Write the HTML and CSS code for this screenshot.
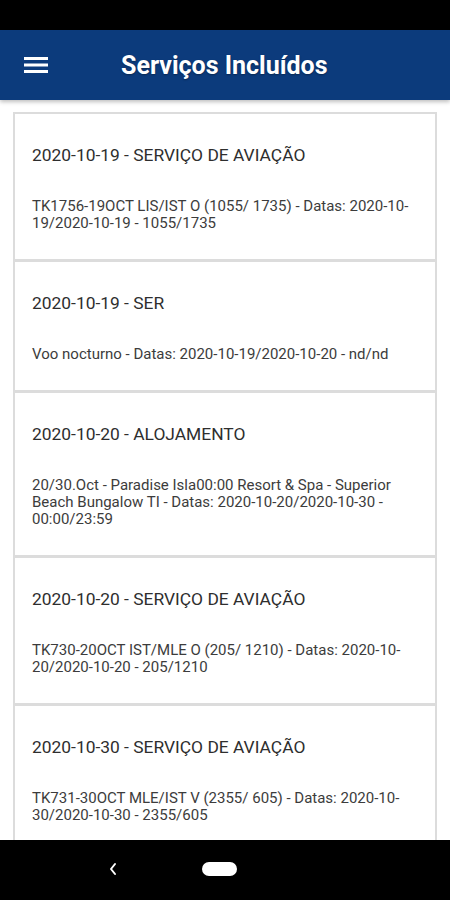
FILE: index.html
```html
<!DOCTYPE html>
<html lang="pt">

<head>
    <meta charset="UTF-8">
    <meta name="viewport" content="width=device-width, initial-scale=1.0">
    <title>Serviços Incluídos</title>
    <link rel="stylesheet" href="styles.css">
</head>

<body>
    <div class="status-bar"></div>

    <header class="app-bar">
        <button class="menu-btn" aria-label="Menu">
            <svg width="24" height="18" viewBox="0 0 24 18">
                <rect x="0" y="1" width="24" height="3" fill="#fff"></rect>
                <rect x="0" y="7.5" width="24" height="3" fill="#fff"></rect>
                <rect x="0" y="14" width="24" height="3" fill="#fff"></rect>
            </svg>
        </button>
        <h1>Serviços Incluídos</h1>
    </header>

    <main class="content">
        <div class="service-list">
            <div class="service-card">
                <h2>2020-10-19 - SERVIÇO DE AVIAÇÃO</h2>
                <p>TK1756-19OCT LIS/IST O (1055/ 1735) - Datas: 2020-10-19/2020-10-19 - 1055/1735</p>
            </div>
            <div class="service-card">
                <h2>2020-10-19 - SER</h2>
                <p>Voo nocturno - Datas: 2020-10-19/2020-10-20 - nd/nd</p>
            </div>
            <div class="service-card">
                <h2>2020-10-20 - ALOJAMENTO</h2>
                <p>20/30.Oct - Paradise Isla00:00 Resort &amp; Spa - Superior Beach Bungalow TI - Datas: 2020-10-20/2020-10-30 - 00:00/23:59</p>
            </div>
            <div class="service-card">
                <h2>2020-10-20 - SERVIÇO DE AVIAÇÃO</h2>
                <p>TK730-20OCT IST/MLE O (205/ 1210) - Datas: 2020-10-20/2020-10-20 - 205/1210</p>
            </div>
            <div class="service-card">
                <h2>2020-10-30 - SERVIÇO DE AVIAÇÃO</h2>
                <p>TK731-30OCT MLE/IST V (2355/ 605) - Datas: 2020-10-30/2020-10-30 - 2355/605</p>
            </div>
        </div>
    </main>

    <nav class="nav-bar">
        <svg class="back" width="12" height="16" viewBox="0 0 12 16">
            <path d="M8 3 L4 8 L8 13" stroke="#fff" stroke-width="2" fill="none" stroke-linecap="round" stroke-linejoin="round"></path>
        </svg>
        <div class="home-pill"></div>
    </nav>
</body>

</html>
```

FILE: styles.css
```css
* {
    box-sizing: border-box;
}

body {
    margin: 0;
    width: 450px;
    height: 900px;
    display: flex;
    flex-direction: column;
    overflow: hidden;
    font-family: Roboto, "Liberation Sans", sans-serif;
    background-color: #fff;
}

.status-bar {
    height: 30px;
    background: #000;
    flex-shrink: 0;
}

.app-bar {
    height: 70px;
    flex-shrink: 0;
    display: flex;
    align-items: center;
    background-color: #0c3b7c;
    box-shadow: 0 2px 4px rgba(0, 0, 0, 0.25);
    position: relative;
    z-index: 1;
}

.menu-btn {
    background: none;
    border: none;
    padding: 0;
    margin-left: 24px;
    width: 24px;
    height: 18px;
    display: flex;
}

.app-bar h1 {
    margin: 0 0 0 73px;
    color: #fff;
    font-size: 25px;
    font-weight: 700;
    text-shadow: 0 1px 2px rgba(0, 0, 0, 0.35);
}

.content {
    flex: 1;
    overflow: hidden;
}

.service-list {
    margin: 13px 13px 0 13px;
}

.service-card {
    border: 2px solid #dcdcdc;
    margin-top: -1px;
    padding: 31px 18px 27px 17px;
    background: #fff;
}

.service-card h2 {
    margin: 0;
    font-size: 17.4px;
    line-height: 20px;
    font-weight: 400;
    color: #2e2e2e;
}

.service-card p {
    margin: 33px 0 0 0;
    font-size: 15px;
    line-height: 17px;
    color: #3c3c3c;
}

.nav-bar {
    height: 60px;
    flex-shrink: 0;
    background: #000;
    display: flex;
    align-items: center;
    padding-left: 107px;
    padding-bottom: 2px;
}

.home-pill {
    width: 35px;
    height: 14px;
    border-radius: 7px;
    background: #fff;
    margin-left: 83px;
}
```
